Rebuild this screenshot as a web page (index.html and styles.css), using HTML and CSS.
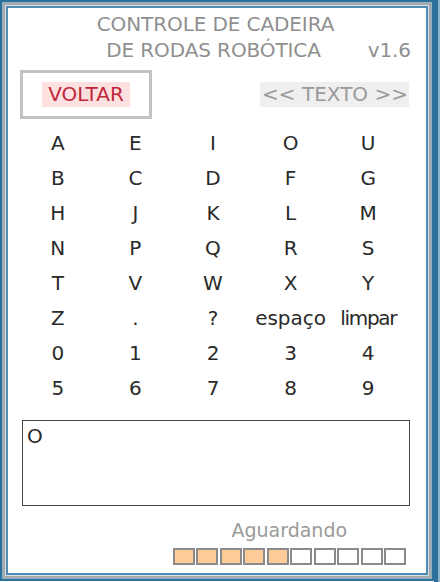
FILE: index.html
```html
<!DOCTYPE html>
<html lang="pt">
<head>
<meta charset="utf-8">
<link rel="stylesheet" href="styles.css">
</head>
<body>
<div class="frame">
  <div class="title">
    <div class="t-line">CONTROLE DE CADEIRA</div>
    <div class="t-line2"><span></span><span class="t-main">DE RODAS ROBÓTICA</span><span class="ver">v1.6</span></div>
  </div>
  <div class="actions">
    <div class="back-box"><span class="back">VOLTAR</span></div>
    <span class="mode">&lt;&lt; TEXTO &gt;&gt;</span>
  </div>
  <div class="keys">
    <span>A</span><span>E</span><span>I</span><span>O</span><span>U</span>
    <span>B</span><span>C</span><span>D</span><span>F</span><span>G</span>
    <span>H</span><span>J</span><span>K</span><span>L</span><span>M</span>
    <span>N</span><span>P</span><span>Q</span><span>R</span><span>S</span>
    <span>T</span><span>V</span><span>W</span><span>X</span><span>Y</span>
    <span>Z</span><span>.</span><span>?</span><span>espaço</span><span class="narrow">limpar</span>
    <span>0</span><span>1</span><span>2</span><span>3</span><span>4</span>
    <span>5</span><span>6</span><span>7</span><span>8</span><span>9</span>
  </div>
  <div class="textbox">O</div>
  <div class="status">
    <div class="status-label">Aguardando</div>
    <div class="bar">
      <span class="cell on"></span><span class="cell on"></span><span class="cell on"></span><span class="cell on"></span><span class="cell on"></span>
      <span class="cell"></span><span class="cell"></span><span class="cell"></span><span class="cell"></span><span class="cell"></span>
    </div>
  </div>
</div>
<div class="next"></div>
</body>
</html>
```
FILE: styles.css
```css
html, body {
  margin: 0;
  padding: 0;
  background: #ffffff;
}
body {
  display: flex;
  font-family: "DejaVu Sans", "Liberation Sans", sans-serif;
  width: 440px;
  height: 582px;
  overflow: hidden;
}
.frame {
  box-sizing: border-box;
  width: 434px;
  height: 581px;
  border: 2px solid #2b6f9a;
  box-shadow: inset 0 0 0 1px #8db3cc, inset 0 0 0 3px #a8a8a8, inset 0 0 0 4px #d3dfe8, inset 0 0 0 6px #4f8bb3;
  padding: 9px 14px 0 15px;
  display: flex;
  flex-direction: column;
}
.next {
  width: 6px;
  height: 582px;
  border-left: 4px solid #2b6f9a;
  box-sizing: border-box;
  background: #8db3cc;
}
.title {
  color: #8f8f8f;
  font-size: 20px;
  line-height: 26px;
  letter-spacing: -0.1px;
}
.t-line {
  text-align: center;
  padding-right: 4px;
}
.t-line2 {
  display: grid;
  grid-template-columns: 1fr auto 1fr;
}
.t-main {
  padding-right: 8px;
}
.ver {
  text-align: right;
  padding-right: 7px;
}
.actions {
  margin-top: 7px;
  display: flex;
  justify-content: space-between;
  align-items: center;
}
.back-box {
  margin-left: 3px;
  width: 132px;
  height: 49px;
  box-sizing: border-box;
  border: 3px solid #c2c2c2;
  display: flex;
  align-items: center;
  justify-content: center;
}
.back {
  background: #fde0e0;
  color: #c0283a;
  font-size: 20px;
  line-height: 25px;
  padding: 0 6px;
}
.mode {
  background: #efefef;
  color: #9a9a9a;
  font-size: 20px;
  line-height: 25px;
  padding: 0 1px 0 2px;
  margin-right: 9px;
}
.keys {
  margin-top: 6px;
  margin-left: 2px;
  width: 388px;
  display: grid;
  grid-template-columns: repeat(5, 1fr);
  grid-auto-rows: 35px;
  align-items: center;
  justify-items: center;
  font-size: 20px;
  color: #2a2a2a;
}
.narrow {
  letter-spacing: -1.3px;
}
.textbox {
  margin-top: 15px;
  margin-left: 5px;
  width: 388px;
  height: 86px;
  box-sizing: border-box;
  border: 1.5px solid #444;
  font-size: 20px;
  line-height: 20px;
  color: #2a2a2a;
  padding: 5px 4px;
}
.status {
  align-self: flex-end;
  margin-right: 12px;
  margin-top: 12px;
  display: flex;
  flex-direction: column;
  align-items: center;
}
.status-label {
  color: #9a9a9a;
  font-size: 19px;
  line-height: 24px;
}
.bar {
  margin-top: 6px;
  display: flex;
  gap: 1.5px;
}
.cell {
  width: 22px;
  height: 17px;
  box-sizing: border-box;
  border: 2px solid #8a8a8a;
  background: #ffffff;
}
.cell.on {
  background: #ffcc99;
}
```
